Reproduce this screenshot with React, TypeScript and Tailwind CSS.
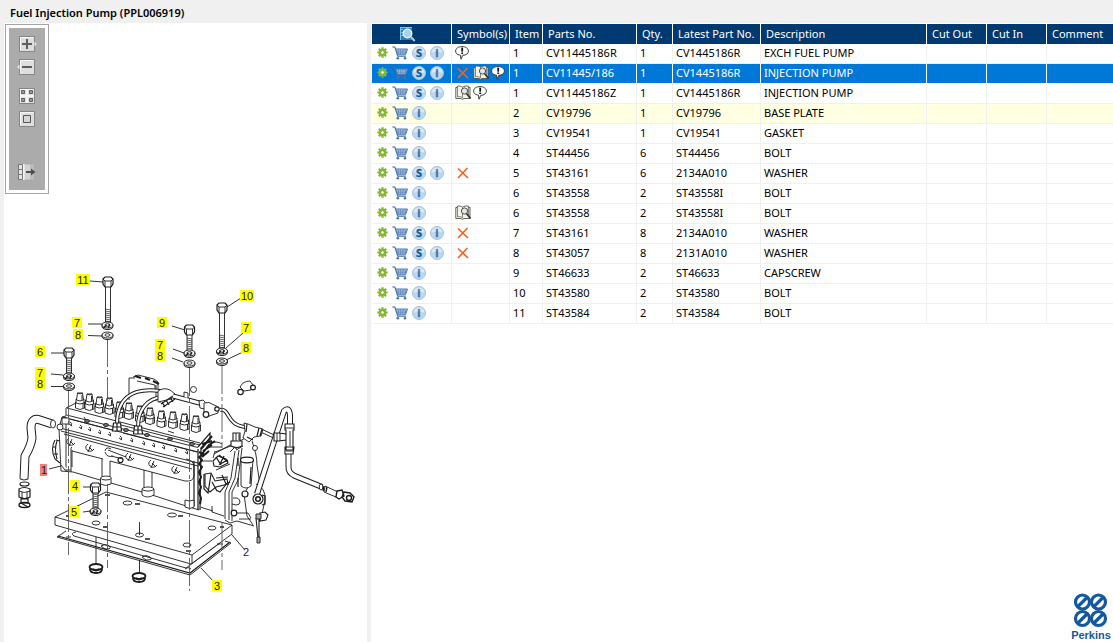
import React, { useState } from "react";

type Mark = "x" | "book" | "note";

interface Part {
  item: string;
  partNo: string;
  qty: string;
  latest: string;
  description: string;
  superseded?: boolean;
  marks?: Mark[];
  tinted?: boolean;
}

const PARTS: Part[] = [
  { item: "1", partNo: "CV11445186R", qty: "1", latest: "CV1445186R", description: "EXCH FUEL PUMP", superseded: true, marks: ["note"] },
  { item: "1", partNo: "CV11445/186", qty: "1", latest: "CV1445186R", description: "INJECTION PUMP", superseded: true, marks: ["x", "book", "note"] },
  { item: "1", partNo: "CV11445186Z", qty: "1", latest: "CV1445186R", description: "INJECTION PUMP", superseded: true, marks: ["book", "note"] },
  { item: "2", partNo: "CV19796", qty: "1", latest: "CV19796", description: "BASE PLATE", tinted: true },
  { item: "3", partNo: "CV19541", qty: "1", latest: "CV19541", description: "GASKET" },
  { item: "4", partNo: "ST44456", qty: "6", latest: "ST44456", description: "BOLT" },
  { item: "5", partNo: "ST43161", qty: "6", latest: "2134A010", description: "WASHER", superseded: true, marks: ["x"] },
  { item: "6", partNo: "ST43558", qty: "2", latest: "ST43558I", description: "BOLT" },
  { item: "6", partNo: "ST43558", qty: "2", latest: "ST43558I", description: "BOLT", marks: ["book"] },
  { item: "7", partNo: "ST43161", qty: "8", latest: "2134A010", description: "WASHER", superseded: true, marks: ["x"] },
  { item: "8", partNo: "ST43057", qty: "8", latest: "2131A010", description: "WASHER", superseded: true, marks: ["x"] },
  { item: "9", partNo: "ST46633", qty: "2", latest: "ST46633", description: "CAPSCREW" },
  { item: "10", partNo: "ST43580", qty: "2", latest: "ST43580", description: "BOLT" },
  { item: "11", partNo: "ST43584", qty: "2", latest: "ST43584", description: "BOLT" },
];

const HEADINGS = ["Symbol(s)", "Item", "Parts No.", "Qty.", "Latest Part No.", "Description", "Cut Out", "Cut In", "Comment"];

/* ---------- table icons ---------- */

function GearIcon() {
  return (
    <svg width="11" height="11" viewBox="0 0 12 12">
      <g stroke="#7fb52b" strokeWidth="2.4">
        <path d="M6 .4v11.200M.4 6h11.200M2 2l8 8M10 2 2 10" />
      </g>
      <circle cx="6" cy="6" r="4.200" fill="#86bb2e" />
      <circle cx="6" cy="6" r="1.800" fill="#fff" stroke="#669a1d" strokeWidth=".6" />
    </svg>
  );
}

function CartIcon() {
  return (
    <svg width="16" height="14" viewBox="0 0 16 14" fill="none">
      <path d="M4 3.2h11.4l-1.6 5H5.4z" fill="#bcd3ea" />
      <path d="M6.3 3.2v5M8.6 3.2v5M10.9 3.2v5M13.2 3.2v5M4.5 5h10.3M5 6.7h9.3" stroke="#5580b4" strokeWidth=".7" />
      <path d="M.3 1h2.5l3 9.2h8" stroke="#456fa6" strokeWidth="1.2" />
      <path d="M3.5 3h12l-1.8 5.3H5.4" stroke="#4d79af" />
      <circle cx="5.8" cy="12.2" r="1.3" fill="#4973a8" />
      <circle cx="13" cy="12.2" r="1.3" fill="#4973a8" />
    </svg>
  );
}

function Badge({ letter, color }: { letter: string; color: string }) {
  return (
    <svg width="14" height="14" viewBox="0 0 14 14">
      <circle cx="7" cy="7" r="6.500" fill="#bcd6ec" stroke="#a3c4e0" />
      <path d="M1.500 7a5.500 5.500 0 0 1 11 0q-5.500-2.500-11 0z" fill="#d8e8f5" />
      <text x="7" y="11" textAnchor="middle" fill={color} stroke={color} strokeWidth=".3" fontSize="11" fontWeight="700" fontFamily="Noto Sans, sans-serif">
        {letter}
      </text>
    </svg>
  );
}

function CrossIcon() {
  return (
    <svg width="16" height="14" viewBox="0 0 16 14">
      <path d="M3 2.500 13 12M12.500 2 3 12" stroke="#f4641f" strokeWidth="1.700" />
    </svg>
  );
}

function BookIcon() {
  return (
    <svg width="16" height="15" viewBox="0 0 16 15">
      <path d="M.8 2.500h1.500V1.200c2-.5 4-.2 5.200 1 1.500-1.200 3.500-1.500 6-1v1.300H15v11H9L7.500 14.300 6 13.500H.8z" fill="#f4f3ea" stroke="#55534a" strokeWidth=".9" />
      <path d="M2.500 1.500v10.300c2-.4 3.700-.1 5 1M7.500 2.300v10.500M13.500 2v10" stroke="#6b695e" strokeWidth=".8" fill="none" />
      <circle cx="9.500" cy="6" r="3.100" fill="#dfe8ec" stroke="#4d4d4a" />
      <path d="m11.500 8.500 4 5" stroke="#33322e" strokeWidth="1.700" />
    </svg>
  );
}

function NoteIcon() {
  return (
    <svg width="14" height="14" viewBox="0 0 14 14">
      <path d="M4.500 9C2 8.600.6 7.100.6 5.100.6 2.400 3.300.6 7 .6s6.400 1.800 6.400 4.500c0 2.400-2.200 4.100-5.600 4.200L6 13.200 5.500 9.200z" fill="#fff" stroke="#3a3a3a" />
      <path d="M7.200 1.700v4" stroke="#111" strokeWidth="1.800" />
      <path d="M7.200 6.500v1.500" stroke="#111" strokeWidth="1.800" />
    </svg>
  );
}

function PageSearchIcon() {
  return (
    <svg width="17" height="16" viewBox="0 0 17 16">
      <path d="M1 1h12v13H1z" fill="#2581bd" />
      <path d="M1 1.500h12M1.500 1v13" stroke="#7fc0e6" />
      <path d="M2.500 3.500h1M2.500 6.500h1M2.500 9.500h1" stroke="#d5ecf8" />
      <circle cx="8.500" cy="7.500" r="4.300" fill="#a9d2ea" stroke="#f1f8fc" strokeWidth="1.300" />
      <path d="m12 11 3.700 4" stroke="#a9c9de" strokeWidth="2" />
    </svg>
  );
}

function MarkIcon({ mark }: { mark: Mark }) {
  if (mark === "x") return <CrossIcon />;
  if (mark === "book") return <BookIcon />;
  return <NoteIcon />;
}

/* ---------- viewer toolbar ---------- */

function Tile({ children }: { children?: React.ReactNode }) {
  return (
    <svg width="20" height="16" viewBox="0 0 20 16">
      <path d="M2.500.5h15v15h-15z" fill="#dedede" stroke="#858585" />
      <path d="M3.500 14.500v-13h13" fill="none" stroke="#f7f7f7" />
      {children}
    </svg>
  );
}

function ViewerToolbar() {
  return (
    <div className="flex w-11 flex-col border border-[#a5a5a5] bg-white p-[3px]">
      <div className="flex flex-col items-center bg-[#ababab] pt-2 pb-[10px]">
        <button aria-label="Zoom in">
          <Tile>
            <path d="m17.500 5.500 2.300 2.500-2.300 2.500z" fill="#e9e9e9" />
            <path d="M10 3v10M5 8h10" stroke="#5e5e5e" strokeWidth="2" />
          </Tile>
        </button>
        <button aria-label="Zoom out" className="mt-[7px]">
          <Tile>
            <path d="M2.500 5.500.2 8l2.300 2.500z" fill="#e9e9e9" />
            <path d="M5 8h10" stroke="#5e5e5e" strokeWidth="2" />
          </Tile>
        </button>
        <button aria-label="Fit to window" className="mt-[13px]">
          <Tile>
            <path d="M10 1v14M3 8h14" stroke="#f6f6f6" strokeWidth="2" />
            <path d="M4.500 2.500h3v3h-3zM12.500 2.500h3v3h-3zM4.500 10.500h3v3h-3zM12.500 10.500h3v3h-3z" fill="#999" stroke="#616161" />
          </Tile>
        </button>
        <button aria-label="Actual size" className="mt-[7px]">
          <Tile>
            <path d="M6.500 4.500h7v7h-7z" fill="#d6d6d6" stroke="#555" />
          </Tile>
        </button>
        <button aria-label="Hide panel" className="mt-[37px]">
          <svg width="20" height="16" viewBox="0 0 20 16">
            <path d="M6 .5h7v15H6z" fill="#d2d2d2" />
            <path d="M13 .5h4v15h-4z" fill="#bcbcbc" />
            <path d="M6.500 0v16" stroke="#f4f4f4" strokeWidth="2" />
            <path d="M1.500.5h4v5h-4zM1.500 5.500h4v5h-4zM1.500 10.500h4v5h-4z" fill="#e5e5e5" stroke="#777" />
            <path d="M9 8h6" stroke="#4d4d4d" strokeWidth="2" />
            <path d="m14 4.500 4.500 3.500-4.500 3.500z" fill="#4d4d4d" />
          </svg>
        </button>
      </div>
    </div>
  );
}

/* ---------- exploded view ---------- */

function Bolt({ x, top, bottom, thread }: { x: number; top: number; bottom: number; thread: number }) {
  const turns: number[] = [];
  for (let y = thread; y < bottom; y += 2) turns.push(y);
  return (
    <g>
      <path d={`M${x - 2.5} ${top + 9}V${bottom}h5V${top + 9}`} fill="#fff" />
      {turns.map((y) => (
        <path key={y} d={`M${x - 2.5} ${y}l5 1`} strokeWidth=".7" />
      ))}
      <path d={`M${x - 5} ${top + 2}l2-2h6l2 2v5l-2 3h-6l-2-3z`} fill="#fff" strokeWidth="1.2" />
      <path d={`M${x - 5} ${top + 2}l2 2h6l2-2M${x - 3} ${top + 4}v6M${x + 3} ${top + 4}v6`} />
    </g>
  );
}

function Washer({ x, y, split }: { x: number; y: number; split?: boolean }) {
  return (
    <g>
      <ellipse cx={x} cy={y + 1} rx="5.500" ry="3.500" fill="#fff" strokeWidth="1.100" />
      <ellipse cx={x} cy={y} rx="5.500" ry="3" fill="#fff" />
      <ellipse cx={x} cy={y} rx="2.600" ry="1.300" />
      {split && <path d={`M${x - 4} ${y + 3}l3-3M${x + 1} ${y + 3}l1-4`} strokeWidth="1.300" />}
    </g>
  );
}

function Injector({ x, y }: { x: number; y: number }) {
  return (
    <g fill="#fff">
      <path d={`M${x - 4.5} ${y + 9}v6q4.500 3 9 0v-6q-4.500 3-9 0z`} />
      <path d={`M${x - 4} ${y + 6}v4q4 2 8 0v-4z`} />
      <path d={`M${x - 2.5} ${y}h5l1 7q-3.500 2-7 0z`} />
      <path d={`M${x - 2.5} ${y}q2.500 1.800 5 0M${x + 2} ${y + 2}v5M${x + 3} ${y + 10}v5`} fill="none" />
    </g>
  );
}

/* a pipe is a dark stroke with a narrower white one on top */
function Pipe({ d, width = 5 }: { d: string; width?: number }) {
  return (
    <g fill="none" strokeLinejoin="round">
      <path d={d} strokeWidth={width} />
      <path d={d} stroke="#fff" strokeWidth={width - 2} />
    </g>
  );
}

const INJECTORS = [
  [80, 393], [89.5, 394], [99.5, 397], [109.5, 398], [119.5, 402], [129, 403],
  [140, 406], [150, 408], [161.5, 411], [173, 412], [184.5, 414], [196, 416],
];

const CALLOUTS = [
  { n: "11", x: 83, y: 280 }, { n: "7", x: 77, y: 323 }, { n: "8", x: 78, y: 335 },
  { n: "9", x: 162, y: 323 }, { n: "7", x: 160, y: 345 }, { n: "8", x: 160, y: 356 },
  { n: "6", x: 40, y: 352 }, { n: "7", x: 40, y: 373 }, { n: "8", x: 40, y: 384 },
  { n: "10", x: 247, y: 296 }, { n: "7", x: 246, y: 328 }, { n: "8", x: 246, y: 348 },
  { n: "4", x: 75, y: 486 }, { n: "5", x: 74, y: 512 }, { n: "3", x: 217, y: 586 },
  { n: "1", x: 44, y: 470, fill: "#f77c7c" }, { n: "2", x: 246, y: 552, fill: "none" },
];

function PumpDrawing() {
  return (
    <svg width="363" height="340" viewBox="4 265 363 340" className="shrink-0" role="img" aria-label="Fuel injection pump exploded view">
      <g stroke="#1c1c1c" strokeWidth=".9" fill="none">
        {/* gasket and base plate */}
        <path d="M66 531 57 537 190 575 231 543 225 541" fill="#fff" />
        <path d="M58 536 190 573 230 542" strokeWidth="1.200" />
        <path d="M76 532q-6 1-2 4l112 32 34-25" />
        <path d="M55 517 106 492 232 525v9l-41 30L55 525z" fill="#fff" />
        <path d="m55 517 137 38v9M192 555l40-30" />
        <path d="M66 537h5M101 546q4-3 8 0t-4 3zM142 557q4-3 8 0t-4 3zM185 569q3-3 6 0M217 544h6" />
        <g fill="#fff">
          <ellipse cx="127.500" cy="503" rx="4.500" ry="2" />
          <ellipse cx="172" cy="515" rx="4.500" ry="2" />
          <ellipse cx="212" cy="528" rx="4" ry="2" />
          <ellipse cx="187" cy="545" rx="4" ry="2" />
          <ellipse cx="96" cy="523" rx="4" ry="2" />
          <ellipse cx="139.500" cy="535" rx="4" ry="2" />
        </g>
        <path d="M135 504h5M178 516h5M103 527h5M145 539h5M66 516h5M105 495h5M186 551h5M220 527h4" strokeWidth="1.500" />

        {/* drain plugs */}
        <path d="M96 537v27M139.500 522v13M139.500 560v14" />
        <g strokeWidth="1.800">
          <ellipse cx="96" cy="567" rx="6.500" ry="3" />
          <path d="M90 569q0 4 6 4t6-4M93 569q3 3 6 0" />
          <ellipse cx="139" cy="576" rx="6.500" ry="3" />
          <path d="M133 578q0 4 6 4t6-4M136 578q3 3 6 0" />
        </g>

        {/* governor housing */}
        <path d="M203 448 215 443 231 447 247 436 252 441 257 462 263 480 265 497 262 512 256 526 230 520 200 511z" fill="#fff" stroke="none" />
        <path d="M215 452 231 446 247 437M200 507 213 511M236 450 243 446M239 450 235 478 229 492 229 520M235 451 231 478 225 492 225 519M242 448 238 480 232 492 232 521M236 446 230 452" />
        <path d="M252 441q5 14 5 24l3 20M256 484q10 4 9 16l-3 14M250 484l-6 10 3 22 6 9M225 520l5 3 7-2 17 5M212 506v6l12 4" />
        <path d="M241 460v26q5 4 10 0l2-26" fill="#fff" />
        <ellipse cx="247" cy="460" rx="6.500" ry="2.800" fill="#fff" strokeWidth="1.200" />
        <path d="M238 458v8M238 478v9M251 467l-1 17" strokeWidth="1.200" />
        <path d="M233 498h4q3 1 3 4t-4 3l-4-1M233 513h15l3 5M239 519h12" />
        <circle cx="245" cy="494" r="3" fill="#fff" strokeWidth="1.200" />
        <circle cx="234" cy="513" r="2.800" fill="#fff" strokeWidth="1.200" />
        <circle cx="255" cy="448" r="2.500" fill="#fff" />
        <path d="M214 454 230 445 237 449M202 461h10M215 451l-2 7M216 470l14-6" />
        <path d="M213 461l5-5 8 3 2 4-8 4-6-1z" fill="#fff" strokeWidth="1.100" />
        <path d="M216 457l5 8M224 456l-4 8 8-4M219 455l9 7" strokeWidth="1.300" />
        <path d="M205 474l6-1 4 8 12-2 1 5-12 3-6 5-5-6z" fill="#fff" strokeWidth="1.100" />
        <path d="M204 474v15l4 4 3-19M212 482l5 9M216 478l12-1M222 475l4 9 4-2M216 490l4 2 8-10" strokeWidth="1.200" />
        <path d="M231 441h11v5q-5 3-11 0zM233 433h7v8h-7z" fill="#fff" strokeWidth="1.100" />
        <path d="M236 433v8M239 434v6M210 444q6-4 12 0M208 447h14" />

        {/* pump body */}
        <path d="M66 408 78 402 210 433 202 449 201 510 197 510 74 473 61 471 59 429z" fill="#fff" stroke="none" />
        <path d="M66 408 78 402M67 408 200 443M66.500 415 198 447.500M62 417 198 452M60 428 198 463M61 431 198 466M64 434 192 469M66 408v8l-4 1-3 11 2 43 12 1 27 8M111 483l31 9M152 495l31 10 16 5" />
        <path d="M66 417v54M71 472v-24l1-1M72 450v17M72 451 103 459M110 461l75 20q8 1 9-5v-10q-1-6-8-7" />
        <path d="M198 447 210 433v6l-9 9-1 62M198 449v61M194 461v45" strokeWidth="1.200" />
        <path d="M201 449 212 436M202 454l7-9 6-4M202 444l10-3M203 451l9-6M202 457l7-6M199 452l4 2-4 3 3 3-3 4 3 3-3 5 2 5-2 5 2 5-2 6 2 5-1 6" strokeWidth="2" />
        <path d="M104 411 110 413M117 424 200 445M70 419 116 431M123 433 197 452M84 417l3 5M146 421l5 4M168 431l6 2" />
        <g fill="#fff">
          <path d="M102 459v19M110 461v17M144 470v19M152 472v17" />
          <path d="M100.500 478v6q5 3 10.500 0v-6q-5 3-10.500 0zM142 489v6q5 4 12 0v-6q-6 3-12 0zM185 500v7q5 3 9 0v-7q-4 2-9 0z" />
          <ellipse cx="106" cy="478" rx="5.300" ry="2" />
          <ellipse cx="148" cy="489" rx="5.800" ry="2" />
          <path d="M62 418h7v6h-7zM61 465l4 5h6" />
          <circle cx="60" cy="427" r="3" />
        </g>
        <path d="M55 440q-5 9 0 19l5 4M57 441q-3 8 0 18M53 447h3M54 454h4M60 441l-4-1" strokeWidth="1.100" />
        {[[70, 424], [80, 427], [89, 429], [99, 432], [109, 434], [120, 438], [131, 440], [143, 443], [153, 445], [163, 447], [175, 450], [186, 452]].map(([x, y]) => (
          <path key={x} d={`M${x - 1} ${y}l3 2M${x} ${y - 2}q3 1 1 4`} />
        ))}
        {[[69, 441], [88, 447], [128, 456], [151, 463], [174, 469]].map(([x, y]) => (
          <path key={x} d={`M${x} ${y - 3}q-4 3-1 6 4 3 7-1M${x + 1} ${y}l4 4M${x + 3} ${y - 2}l-3 7`} />
        ))}
        <path d="M105 451q1-5 6-2M105 452q2 6 8 4M108 450l18 7M111 456l12 3" />
        <circle cx="120.500" cy="460" r="2.500" strokeWidth="1.200" />
        <g fill="#777">
          <ellipse cx="87" cy="421" rx="2.500" ry="1.500" />
          <ellipse cx="106" cy="425" rx="2.500" ry="1.500" />
          <ellipse cx="126" cy="430" rx="2.500" ry="1.500" />
          <ellipse cx="147" cy="435" rx="2.500" ry="1.500" />
          <ellipse cx="170" cy="439" rx="2.500" ry="1.500" />
          <ellipse cx="192" cy="444" rx="2.500" ry="1.500" />
        </g>

        {/* bracket behind the injectors */}
        <path d="M129 400v-22h6M133 377l5-2 16 4 4 3v9M137 381l18 4v6M156 385v16M160 389v14" />
        <path d="M135 376l6 2M145 378l5 2M153 381l6 3" strokeWidth="2" />
        {INJECTORS.map(([x, y]) => (
          <Injector key={x} x={x} y={y} />
        ))}

        {/* leak-off and delivery pipes */}
        <Pipe d="M117 424C117 400 130 387 160 391" width={4} />
        <Pipe d="M138 427C138 410 147 398 163 397" width={4} />
        <path d="M113.500 423h7l1 8h-9zM134.500 426h7l1 8h-9z" fill="#fff" strokeWidth="1.200" />
        <path d="M113 427h8M134 430h8M117 423v8M138 426v8" strokeWidth="1.200" />
        <path d="M158 391q6-4 12-1l5 4-4 5-13 3z" fill="#fff" />
        <path d="M161 404 173 396M163 407 175 399M162 402l3 5M166 400l3 5M170 397l3 5" strokeWidth="1.200" />
        <Pipe d="M173 396 203 404" width={5} />
        <path d="M184 397v-5l4 1v5M199 401l4-1 3 3-1 6-5-1z" fill="#fff" />
        <circle cx="193.500" cy="389.500" r="3" fill="#fff" />
        <path d="M204 403q5-2 10 2l4 2v6l-6 2-5 2-3-3z" fill="#fff" />
        <circle cx="206" cy="414.500" r="2.800" fill="#fff" strokeWidth="1.200" />
        <circle cx="217" cy="409" r="2.200" fill="#fff" strokeWidth="1.200" />
        <Pipe d="M220 410C230 408 226 425 245 427" width={4} />
        <Pipe d="M262 431 275 437" width={4} />
        <path d="M244 423l4 1 7 3 8 2-2 7-7 1-5 5-6-4 2-7z" fill="#fff" />
        <path d="M247 424l-1 8M259 428l-2 8M247 437l6 3M262 429l-2 7" strokeWidth="1.200" />
        <path d="M240 387q3-6 10-6l3 4-2 5-7 1z" fill="#fff" />
        <circle cx="240.500" cy="392" r="2.700" fill="#fff" strokeWidth="1.200" />
        <circle cx="253" cy="387.500" r="2.400" fill="#fff" strokeWidth="1.200" />

        {/* return loop on the right */}
        <Pipe d="M290 428V415Q289 406 284 411L281 420 257 494" width={6} />
        <Pipe d="M288.500 450V466Q288 473 295 476L322 487" width={6} />
        <path d="M285 424h9v6h-1v20h-7v-20h-1zM285 447h9l-1 7h-8zM274 433h5l7 1v6l-7 1h-5z" fill="#fff" strokeWidth="1.100" />
        <path d="M285 428h9M286 451h7M277 433v8M280 433v8M290 431v15" />
        <ellipse cx="321" cy="487" rx="1.800" ry="3" fill="#fff" />
        <path d="M325 486l13 6-2 5-12-5z" fill="#fff" />
        <path d="M324 486l-1 5M327 487l-1 5M337 491l5-1 2 6-5 3-3-2zM344 492l6 1 4 4-2 5-7-1-3-4z" fill="#fff" strokeWidth="1.400" />
        <circle cx="349" cy="498" r="2.500" strokeWidth="1.400" />
        <circle cx="258" cy="499" r="5" fill="#fff" strokeWidth="1.200" />
        <circle cx="258" cy="499" r="2.300" strokeWidth="1.500" />
        <path d="M262 495l3 1v8l-3 1" strokeWidth="1.200" />
        <path d="M259 518v20M256 518l2 20M260 513l5-1 3 3-2 5-6 1z" fill="#fff" strokeWidth="1.100" />
        <path d="M256 514h5v5h-5zM257 537h3v6h-3z" fill="#aaa" />

        {/* breather hose */}
        <Pipe d="M52 424 40 420Q31 417 31 428L32 438Q31 446 25 456L24 479" width={9} />
        <ellipse cx="53" cy="424" rx="2.500" ry="4" fill="#fff" />
        <path d="M20 479q4 2 8 0" />
        <ellipse cx="24.500" cy="484" rx="4.500" ry="2" strokeWidth="1.200" />
        <path d="M19 489q5-3 11 0v8q-5 3-11 0zM21 499h7v4h-7z" fill="#fff" strokeWidth="1.200" />
        <path d="M19 491q5 3 11 0M22 492v6M27 492v6" />
        <ellipse cx="24.500" cy="505" rx="5.500" ry="2.500" strokeWidth="1.400" />
        <path d="M21 503l7 4" strokeWidth="1.200" />

        {/* centre lines */}
        <g stroke="#555" strokeDasharray="28 3 4 3">
          <path d="M68.500 390v165M107.500 339v62M107.500 484v84M189.500 368v223M222 366v82M222 522v48" />
        </g>

        {/* fasteners */}
        <Bolt x={108} top={277} bottom={322} thread={309} />
        <Washer x={107.5} y={325} split />
        <Washer x={107.5} y={335} />
        <Bolt x={69} top={348} bottom={374} thread={360} />
        <Washer x={69} y={376} split />
        <Washer x={69} y={386} />
        <Bolt x={189.5} top={325} bottom={351} thread={338} />
        <Washer x={189.5} y={353} split />
        <Washer x={189.5} y={363} />
        <Bolt x={222} top={303} bottom={348} thread={335} />
        <Washer x={222} y={351} split />
        <Washer x={222} y={361} />
        <Bolt x={95.5} top={483} bottom={508} thread={494} />
        <Washer x={95.5} y={511} split />

        {/* leader lines */}
        <path d="M90 281l13 1M88 324h14M88 335.500l14 .5M51 353h13M51 374l12 1M51 386.500h12M172 326l13 4M173 349l11 4M172 358l11 4M241 298l-14 9M243 333l-17 15M243 352l-17 8M49 469l12-3M83 487h8M83 512l8-1M244 549l-12-14M214 582l-13-14" />
      </g>

      <g fontFamily="Liberation Sans, sans-serif" fontSize="11" textAnchor="middle" fill="#1a1a1a">
        {CALLOUTS.map(({ n, x, y, fill = "#ffff00" }) => (
          <g key={`${n}-${x}-${y}`}>
            <rect x={x - (n.length > 1 ? 7 : n === "1" ? 4 : 5)} y={y - 6} width={n.length > 1 ? 14 : n === "1" ? 7 : 10} height={n === "1" ? 12 : 11} fill={fill} />
            <text x={x} y={y + 4}>{n}</text>
          </g>
        ))}
      </g>
    </svg>
  );
}

function PerkinsLogo() {
  return (
    <div className="mt-auto flex w-11 flex-col items-center self-end">
      <svg width="36" height="36" viewBox="0 0 36 36" fill="none" stroke="#14599d" strokeWidth="3.200">
        <circle cx="9.500" cy="10" r="7" />
        <circle cx="25.500" cy="10" r="7" />
        <circle cx="9.500" cy="26.500" r="7" />
        <circle cx="25.500" cy="26.500" r="7" />
        <path d="M4.500 15 14.500 5M20.500 15 30.500 5M4.500 31.500l10-10M20.500 31.500l10-10" />
      </svg>
      <span className="font-['Liberation_Sans',sans-serif] text-[11px] leading-[14px] font-bold text-[#14599d]">Perkins</span>
    </div>
  );
}

export default function App() {
  const [selected, setSelected] = useState(1);

  return (
    <div className="flex min-h-screen flex-col bg-[#f0f0f0] font-['Noto_Sans',sans-serif] text-[11px] text-black">
      <h1 className="h-[23px] pt-[3px] pl-[10px] leading-5 font-semibold">Fuel Injection Pump (PPL006919)</h1>

      <main className="flex flex-1 gap-1 pl-1">
        <section className="flex w-[363px] shrink-0 flex-col gap-[71px] bg-white">
          <div className="pt-px pl-px">
            <ViewerToolbar />
          </div>
          <PumpDrawing />
        </section>

        <section className="flex min-w-0 flex-1 flex-col bg-white pt-px pl-px">
          <table className="w-full table-fixed border-separate border-spacing-0">
            <colgroup>
              <col className="w-20" />
              <col className="w-[58px]" />
              <col className="w-[33px]" />
              <col className="w-[94px]" />
              <col className="w-9" />
              <col className="w-[88px]" />
              <col className="w-[166px]" />
              <col className="w-[60px]" />
              <col className="w-[60px]" />
              <col />
            </colgroup>
            <thead>
              <tr className="h-5 bg-[#003a70] text-left text-white">
                <th className="border-r border-white p-0" aria-label="Actions">
                  <div className="flex justify-center pr-2">
                    <PageSearchIcon />
                  </div>
                </th>
                {HEADINGS.map((heading) => (
                  <th key={heading} className="border-r border-white py-0 pr-0 pl-[5px] leading-5 font-normal whitespace-nowrap last:border-r-0">
                    {heading}
                  </th>
                ))}
              </tr>
            </thead>
            <tbody>
              {PARTS.map((part, i) => {
                const active = i === selected;
                const cell = `h-5 border-r border-b px-0 pt-0 pb-[2px] leading-[17px] whitespace-nowrap last:border-r-0 ${active ? "border-white" : "border-[#f0f0f0]"}`;
                const rowColor = active ? "bg-[#0078d7] text-white" : part.tinted ? "bg-[#ffffe1]" : "bg-white";
                return (
                  <tr key={i} className={rowColor} onClick={() => setSelected(i)}>
                    <td className={cell}>
                      <div className="flex h-[17px] items-center gap-1 pl-[5px]">
                        <button aria-label="Options"><GearIcon /></button>
                        <button aria-label="Add to cart"><CartIcon /></button>
                        {part.superseded && (
                          <button aria-label="Supersession"><Badge letter="S" color="#0e5f9c" /></button>
                        )}
                        <button aria-label="Information"><Badge letter="i" color="#3f6fa8" /></button>
                      </div>
                    </td>
                    <td className={cell}>
                      <div className="flex h-[17px] items-center gap-[2px] pl-[3px]">
                        {part.marks?.map((mark) => <MarkIcon key={mark} mark={mark} />)}
                      </div>
                    </td>
                    <td className={cell}><span className="pl-[3px]">{part.item}</span></td>
                    <td className={cell}><span className="pl-[3px]">{part.partNo}</span></td>
                    <td className={cell}><span className="pl-[3px]">{part.qty}</span></td>
                    <td className={cell}><span className="pl-[3px]">{part.latest}</span></td>
                    <td className={cell}><span className="pl-[3px]">{part.description}</span></td>
                    <td className={cell} />
                    <td className={cell} />
                    <td className={cell} />
                  </tr>
                );
              })}
            </tbody>
          </table>
          <PerkinsLogo />
        </section>
      </main>
    </div>
  );
}
